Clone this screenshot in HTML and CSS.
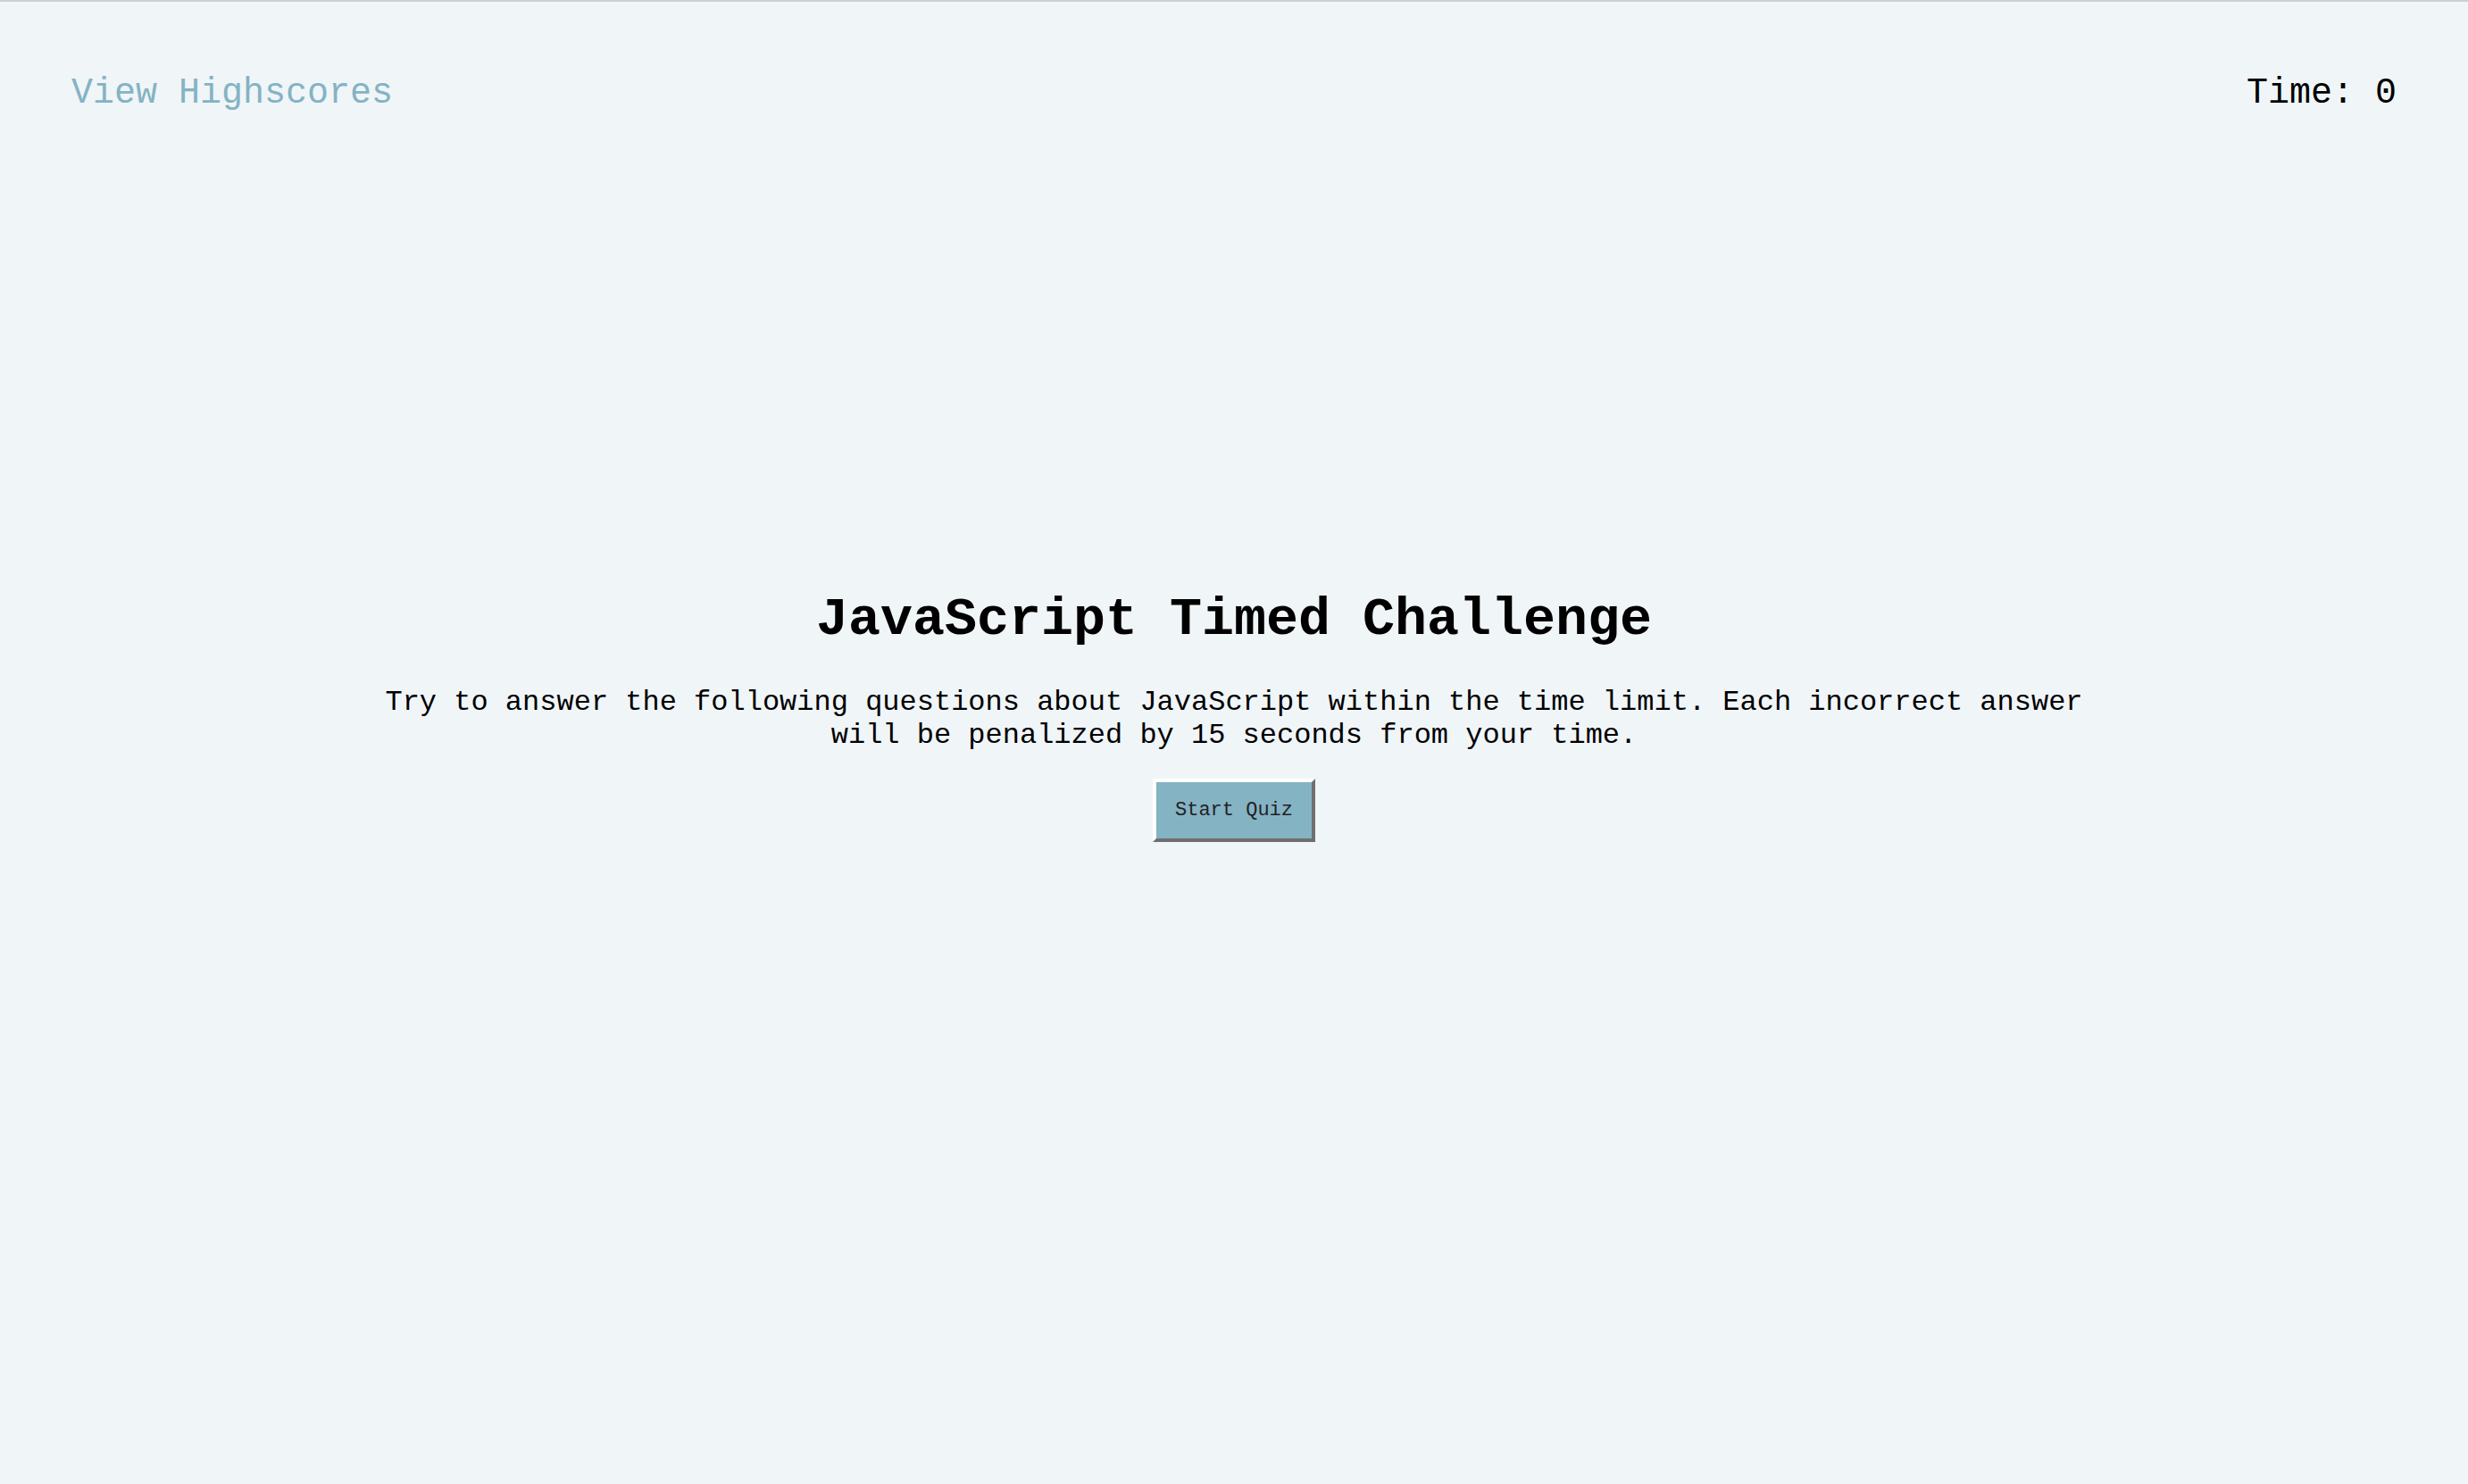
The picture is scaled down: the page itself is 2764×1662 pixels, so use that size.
FILE: index.html
```html
<!DOCTYPE html>
<html lang="en">
<head>
<meta charset="utf-8">
<title>JavaScript Timed Challenge</title>
<link rel="stylesheet" href="styles.css">
</head>
<body>
<header class="topbar">
  <a class="highscores" href="#">View Highscores</a>
  <div class="timer">Time: <span>0</span></div>
</header>
<main class="intro">
  <h1 class="title">JavaScript Timed Challenge</h1>
  <p class="lead">Try to answer the following questions about JavaScript within the time limit. Each incorrect answer will be penalized by 15 seconds from your time.</p>
  <button class="start" type="button">Start Quiz</button>
</main>
</body>
</html>
```

FILE: styles.css
```css
html, body {
  margin: 0;
  padding: 0;
}
body {
  background: #f0f5f8;
  border-top: 2px solid #cbd0d4;
  font-family: "Courier New", "Nimbus Mono PS", "FreeMono", "Liberation Mono", monospace;
  color: #000;
  min-height: 1660px;
  box-sizing: border-box;
}
.topbar {
  display: flex;
  justify-content: space-between;
  align-items: flex-start;
  padding: 80px 80px 0 80px;
  font-size: 40px;
}
.highscores {
  color: #84b3c4;
  text-decoration: none;
}
.timer {
  color: #000;
}
.intro {
  display: flex;
  flex-direction: column;
  align-items: center;
  margin-top: 533px;
}
.title {
  margin: 0;
  font-size: 60px;
  font-weight: bold;
}
.lead {
  width: 70%;
  margin: 40px 0 0 0;
  text-align: center;
  font-size: 32px;
}
.start {
  margin-top: 30px;
  font-family: "Courier New", "Nimbus Mono PS", "FreeMono", "Liberation Mono", monospace;
  font-size: 22px;
  color: #222;
  background: #84b3c4;
  border: 4px solid;
  border-color: #ffffff #6f6f6f #6f6f6f #ffffff;
  padding: 19px 21px;
  cursor: pointer;
}
```
